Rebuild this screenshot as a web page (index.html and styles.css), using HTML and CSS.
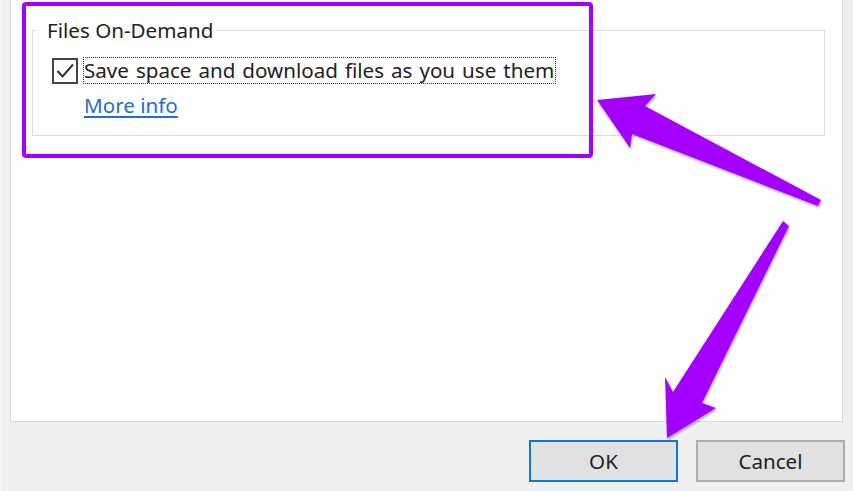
FILE: index.html
```html
<!DOCTYPE html>
<html>
<head>
<meta charset="utf-8">
<link rel="stylesheet" href="styles.css">
</head>
<body>
<div class="window">
  <div class="panel">
    <fieldset class="group">
      <legend class="group-title">Files On-Demand</legend>
      <div class="check-row">
        <span class="checkbox">
          <svg width="22" height="22" viewBox="0 0 22 22"><polyline points="3.5,11 8.5,16.5 19,4.5" fill="none" stroke="#333" stroke-width="2"/></svg>
        </span>
        <span class="check-label">Save space and download files as you use them</span>
      </div>
      <a class="more-link" href="#">More info</a>
    </fieldset>
  </div>
  <div class="buttons">
    <button class="btn btn-default">OK</button>
    <button class="btn">Cancel</button>
  </div>
</div>
<svg class="annotations" width="853" height="491" viewBox="0 0 853 491">
  <rect x="24" y="4" width="567" height="152" rx="2" fill="none" stroke="#a300ff" stroke-width="4"/>
  <g class="arrow">
    <polygon points="597,100 656,94 645,106 821,200 818,206 632,134 630,148" fill="#a300ff"/>
    <polygon points="783,221 789,226 702,403 716,408 667,438 665,377 673,392" fill="#a300ff"/>
  </g>
</svg>
</body>
</html>
```
FILE: styles.css
```css
html, body {
  margin: 0;
  padding: 0;
}
body {
  width: 853px;
  height: 491px;
  overflow: hidden;
  background: #f0eff1;
  font-family: "Noto Sans", "Open Sans", sans-serif;
  font-size: 20.6px;
  color: #1a1a1a;
  position: relative;
}
.window {
  display: flex;
  flex-direction: column;
  height: 100%;
  border-left: 2px solid #f3f5f3;
  box-sizing: border-box;
}
.panel {
  margin-top: -2px;
  margin-left: 8px;
  width: 833px;
  height: 424px;
  box-sizing: border-box;
  background: #fefefe;
  border: 1px solid #d9d9db;
  padding-top: 17px;
}
.group {
  margin: 0 17px 0 21px;
  border: 1px solid #dcdcdc;
  padding: 13px 10px 16px 19px;
  min-width: 0;
}
.group-title {
  padding: 0 4px 0 11px;
  margin-left: -16px;
  line-height: 28px;
  color: #222;
}
.check-row {
  display: flex;
  align-items: center;
  gap: 5px;
  height: 27px;
}
.checkbox {
  width: 22px;
  height: 22px;
  border: 2px solid #444;
  display: flex;
  flex: none;
}
.check-label {
  border: 1px dotted #333;
  line-height: 25px;
  padding: 0 1px 0 0;
  word-spacing: 1.6px;
  color: #222;
}
.more-link {
  display: inline-block;
  margin-top: 9px;
  margin-left: 32px;
  line-height: 25px;
  color: #1f6fd1;
  text-decoration: underline;
  text-underline-offset: 3px;
}
.buttons {
  display: flex;
  justify-content: flex-end;
  gap: 18px;
  margin-top: 18px;
  padding-right: 8px;
}
.btn {
  width: 149px;
  height: 42px;
  box-sizing: border-box;
  background: #e1e1e1;
  border: 2px solid #adadad;
  font-family: "Noto Sans", "Open Sans", sans-serif;
  font-size: 20.6px;
  color: #222;
  padding: 0;
}
.btn-default {
  border-color: #0a78d4;
}
.annotations {
  position: absolute;
  left: 0;
  top: 0;
  pointer-events: none;
}
.arrow {
  filter: drop-shadow(1px 2px 1px rgba(60, 60, 60, 0.4));
}
```
